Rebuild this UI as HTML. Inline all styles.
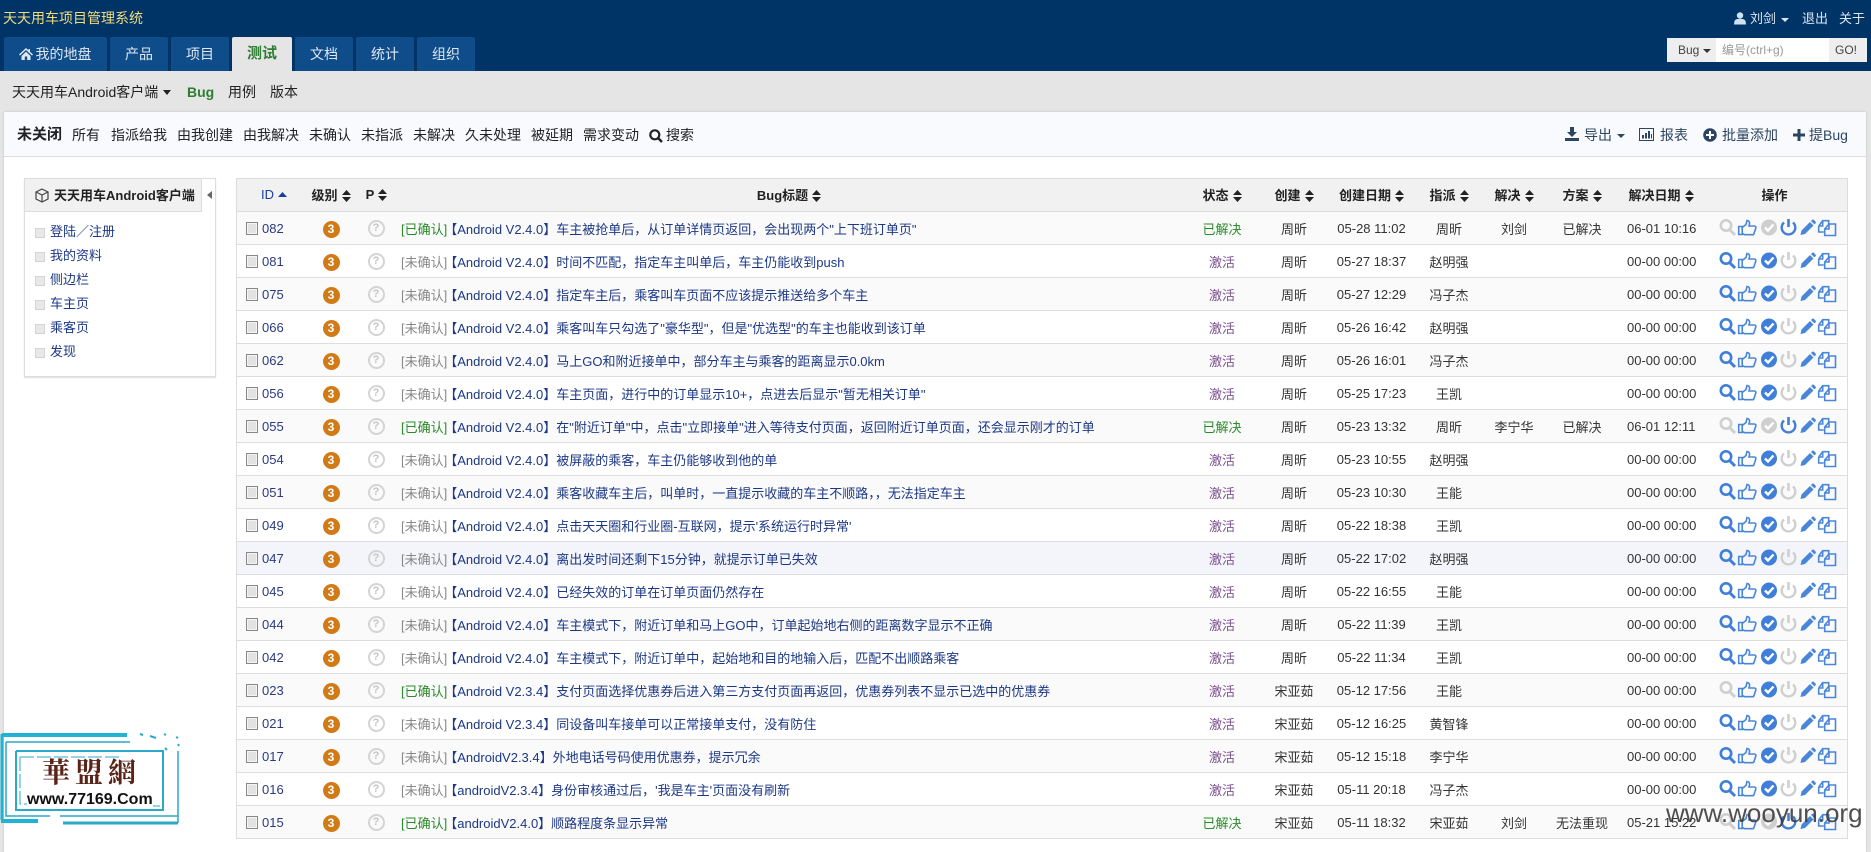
<!DOCTYPE html>
<html lang="zh"><head><meta charset="utf-8"><title>天天用车项目管理系统</title>
<style>
*{box-sizing:border-box}
html,body{margin:0;padding:0;width:1871px;height:842px;overflow:hidden;background:#e5e5e5;font:13px "Liberation Sans","WenQuanYi Zen Hei","Noto Sans CJK SC",sans-serif;color:#222}
.a{position:absolute;white-space:nowrap}
#top{position:absolute;left:0;top:0;width:1871px;height:71px;background:#003366}
.tab{position:absolute;top:37px;height:34px;background:#0f4c8a;color:#dfe8f2;font-size:14px;line-height:34px;text-align:center;border-radius:2px 2px 0 0}
.tab.on{background:#e5e5e5;color:#2e7d32;font-weight:bold;font-size:15px}
#panel{position:absolute;left:4px;top:112px;width:1862px;height:740px;background:#fff;box-shadow:0 0 2px #bbb}
#bar{position:absolute;left:0;top:0;width:1862px;height:45px;background:#f8fafd;border-bottom:1px solid #ddd}
.t{position:absolute;top:125px;font-size:14px;line-height:20px;color:#222;white-space:nowrap}
.r{color:#2c4560}
#side{position:absolute;left:24px;top:178px;width:192px;height:199px;background:#fff;border:1px solid #ddd;box-shadow:0 1px 1px #ddd}
#sh{position:absolute;left:0;top:0;width:190px;height:33px;background:#f1f1f1;border-bottom:1px solid #ddd;font-weight:bold;font-size:13px;line-height:33px;white-space:nowrap}
#sh span{position:absolute;left:29px;top:0}
#sb{position:absolute;left:176px;top:0;width:14px;height:33px;background:#fff;border-left:1px solid #ddd}
.li{position:absolute;left:25px;color:#1c3885;line-height:20px;white-space:nowrap}
.li:before{content:"";position:absolute;left:-15px;top:6px;width:8px;height:8px;background:#e8e8e8;border:1px solid #d4d4d4}
table{position:absolute;left:236px;top:178px;width:1612px;table-layout:fixed;border-collapse:separate;border-spacing:0;border-left:1px solid #ddd;border-right:1px solid #ddd;color:#333}
th{height:34px;padding:0 0 2px;background:#f1f1f1;border-top:1px solid #ddd;border-bottom:1px solid #ddd;font-size:13px;font-weight:bold;color:#222;white-space:nowrap;text-align:center}
td{height:33px;padding:0;border-bottom:1px solid #ddd;text-align:center;white-space:nowrap;overflow:visible}
tr:nth-child(odd) td{background:#fafafa}
tr.h td{background:#f3f5fa!important}
.s{display:inline-block;width:9px;height:12px;margin-left:4px;vertical-align:-2px}
.i{text-align:left;color:#2a3a80}
.c{display:inline-block;width:12px;height:13px;margin:0 4px 0 9px;border:1px solid #888;background:#e2e2e2;box-shadow:inset 0 0 0 1px #f4f4f4;vertical-align:-2px}
.l{display:inline-block;position:relative;top:1px;width:17px;height:17px;border-radius:50%;background:#d27a16;color:#fff;font-size:12px;font-weight:bold;line-height:17px;text-align:center}
.q{display:inline-block;position:relative;top:0;left:1px;width:17px;height:17px;border-radius:50%;border:2px solid #d4d4d4;color:#c4c4c4;font-size:11px;font-style:normal;font-weight:bold;line-height:13px;text-align:center}
.n{text-align:left;color:#1c3885;padding-left:3px}
.n em{font-style:normal;color:#888;margin-right:-3px}
.n em.g{color:#2a8a2a}
.x{color:#7a4f8e}.y{color:#2a8a2a}.d{color:#333}
.o{display:block;width:120px;height:32px;margin-left:23px}
</style></head><body>
<svg width="0" height="0" style="position:absolute"><defs>
<symbol id="ar" viewBox="0 0 9 12"><path d="M0 5L4.5 0 9 5zM0 7l4.5 5L9 7z" fill="#222"/></symbol>
<g id="sr" fill="none"><circle cx="8" cy="13.5" r="5.2" stroke-width="2.6"/><path d="M12 18l5 5" stroke-width="3"/></g>
<g id="ck"><circle cx="51" cy="15.5" r="8"/><path d="M47 15.5l3 3 5.5-6" fill="none" stroke="#fff" stroke-width="2.4"/></g>
<g id="pw" fill="none" stroke-width="2.4"><path d="M66 10.5A6.8 6.8 0 1 0 75 10.5"/><path d="M70.5 7v8" stroke-width="2.6"/></g>
<g id="rest"><g fill="none" stroke="#4a86d8" stroke-width="1.6"><path d="M20.7 14.5h3.5v8h-3.5zM24.2 15.5l3.8-3 1-4q3 .2 2.5 3.5l-.5 2h5.2q2 0 1.6 2l-1.8 5.5q-.3 1.2-1.5 1.2h-7.800l-2.500-1.200"/><path d="M100.700 14l4-5.300h6v5M100.700 14v6h5M104.700 8.700v5.300h-4"/><path d="M106.700 17l4.300-5h6.500v11.500h-10.800zM111 12v5h-4.300"/></g><path d="M82.500 23l1-4.500 8.500-8.500 3.500 3.500-8.500 8.500z" fill="#4a86d8"/><path d="M93 9l1.200-1.200q.8-.7 1.600 0l1.800 1.800q.7.8 0 1.600l-1.200 1.200z" fill="#4a86d8"/></g>
<symbol id="A" viewBox="0 0 120 32"><use href="#sr" stroke="#3f7fd9"/><use href="#ck" fill="#3f7fd9"/><use href="#pw" stroke="#cfcfcf"/><use href="#rest"/></symbol>
<symbol id="B" viewBox="0 0 120 32"><use href="#sr" stroke="#cfcfcf"/><use href="#ck" fill="#3f7fd9"/><use href="#pw" stroke="#cfcfcf"/><use href="#rest"/></symbol>
<symbol id="C" viewBox="0 0 120 32"><use href="#sr" stroke="#cfcfcf"/><use href="#ck" fill="#cfcfcf"/><use href="#pw" stroke="#3f7fd9"/><use href="#rest"/></symbol>
</defs></svg>

<div id="top"></div>
<div class="a" style="left:3px;top:8px;font-size:14px;line-height:20px;color:#f2dc7c">天天用车项目管理系统</div>
<div class="a" style="left:1734px;top:9px;width:137px;height:20px;color:#dde6f0;line-height:20px">
<svg class="a" style="left:0;top:3px" width="12" height="13" viewBox="0 0 12 13"><circle cx="6" cy="3.500" r="3.200" fill="#cfe0f0"/><path d="M0 12.500q0-5.500 3.500-5.500h5q3.500 0 3.500 5.500z" fill="#cfe0f0"/></svg>
<span class="a" style="left:16px">刘剑</span><span class="a" style="left:47px;top:9px;border:4px solid transparent;border-top-color:#dde6f0;border-bottom:0"></span><span class="a" style="left:68px">退出</span><span class="a" style="left:105px">关于</span></div>

<div class="tab" style="left:4px;width:103px;padding-left:16px">我的地盘<svg class="a" style="left:15px;top:11px" width="14" height="12" viewBox="0 0 14 12"><path d="M7 0L0 6.500l1 1L7 2l6 5.500 1-1-3-2.800V1H9.500v1.400zM2.500 8v4h3.300V8.500h2.400V12h3.300V8L7 3.800z" fill="#dfe8f2"/></svg></div>
<div class="tab" style="left:110px;width:58px">产品</div>
<div class="tab" style="left:171px;width:58px">项目</div>
<div class="tab on" style="left:232px;width:60px">测试</div>
<div class="tab" style="left:295px;width:58px">文档</div>
<div class="tab" style="left:356px;width:58px">统计</div>
<div class="tab" style="left:417px;width:58px">组织</div>

<div class="a" style="left:1667px;top:38px;width:200px;height:24px;background:#eee;line-height:24px;color:#444">
<span class="a" style="left:11px;font-size:12px">Bug</span><span class="a" style="left:36px;top:11px;border:4px solid transparent;border-top-color:#333;border-bottom:0"></span>
<span class="a" style="left:49px;top:0;width:113px;height:24px;background:#fff;padding-left:6px;color:#999;font-size:12px">编号(ctrl+g)</span>
<span class="a" style="left:168px;font-size:12px">GO!</span></div>

<div class="t" style="left:12px;top:82px">天天用车Android客户端</div>
<span class="a" style="left:163px;top:90px;border:4px solid transparent;border-top-color:#222;border-bottom:0;border-top-width:5px"></span>
<div class="t" style="left:187px;top:82px;color:#2e7d32;font-weight:bold">Bug</div>
<div class="t" style="left:228px;top:82px">用例</div>
<div class="t" style="left:270px;top:82px">版本</div>

<div id="panel"><div id="bar"></div></div>

<div class="t" style="left:17px;font-weight:bold;font-size:15px">未关闭</div>
<div class="t" style="left:72px">所有</div>
<div class="t" style="left:111px">指派给我</div>
<div class="t" style="left:177px">由我创建</div>
<div class="t" style="left:243px">由我解决</div>
<div class="t" style="left:309px">未确认</div>
<div class="t" style="left:361px">未指派</div>
<div class="t" style="left:413px">未解决</div>
<div class="t" style="left:465px">久未处理</div>
<div class="t" style="left:531px">被延期</div>
<div class="t" style="left:583px">需求变动</div>
<svg class="a" style="left:649px;top:129px" width="14" height="14" viewBox="0 0 14 14"><circle cx="5.800" cy="5.800" r="4.500" fill="none" stroke="#222" stroke-width="2.200"/><path d="M9 9l4 4" stroke="#222" stroke-width="2.500"/></svg>
<div class="t" style="left:666px">搜索</div>

<svg class="a" style="left:1565px;top:127px" width="14" height="14" viewBox="0 0 14 14"><path d="M5 0h4v5h3L7 10 2 5h3zM0 11h14v3H0z" fill="#2c4560"/></svg>
<div class="t r" style="left:1584px">导出</div>
<span class="a" style="left:1617px;top:134px;border:4px solid transparent;border-top-color:#2c4560;border-bottom:0"></span>
<svg class="a" style="left:1639px;top:128px" width="15" height="13" viewBox="0 0 15 13"><path d="M.5.500h14v12H.500z" fill="none" stroke="#2c4560"/><path d="M3 7h2v3.500H3zM6 5h2v5.500H6zM9 3h2v7.500H9zM12 6h1v4.500h-1z" fill="#2c4560"/></svg>
<div class="t r" style="left:1660px">报表</div>
<svg class="a" style="left:1703px;top:128px" width="14" height="14" viewBox="0 0 14 14"><circle cx="7" cy="7" r="6.800" fill="#2c4560"/><path d="M6 3h2v3h3v2H8v3H6V8H3V6h3z" fill="#fff"/></svg>
<div class="t r" style="left:1722px">批量添加</div>
<svg class="a" style="left:1793px;top:129px" width="12" height="12" viewBox="0 0 12 12"><path d="M4.500 0h3v4.500H12v3H7.500V12h-3V7.500H0v-3h4.500z" fill="#2c4560"/></svg>
<div class="t r" style="left:1809px">提Bug</div>

<div id="side">
<div id="sh"><svg class="a" style="left:10px;top:9px" width="14" height="15" viewBox="0 0 14 15"><path d="M7 1l6 3v7l-6 3-6-3V4zM1 4l6 3 6-3M7 7v7" fill="none" stroke="#444" stroke-width="1.200"/></svg><span>天天用车Android客户端</span></div>
<div id="sb"><span class="a" style="left:5px;top:12px;border:4px solid transparent;border-right:5px solid #666;border-left:0"></span></div>
<div class="li" style="top:43px">登陆／注册</div>
<div class="li" style="top:67px">我的资料</div>
<div class="li" style="top:91px">侧边栏</div>
<div class="li" style="top:115px">车主页</div>
<div class="li" style="top:139px">乘客页</div>
<div class="li" style="top:163px">发现</div>
</div>

<table>
<colgroup><col style="width:73px"><col style="width:42px"><col style="width:46px"><col style="width:794px"><col style="width:60px"><col style="width:84px"><col style="width:71px"><col style="width:84px"><col style="width:46px"><col style="width:90px"><col style="width:68px"><col style="width:152px"></colgroup>
<thead><tr>
<th style="text-align:left;padding-left:24px;color:#1a3ea0;font-weight:normal">ID<svg width="9" height="5" style="margin-left:4px;vertical-align:2px"><path d="M0 5L4.500 0 9 5z" fill="#1a3ea0"/></svg></th>
<th>级别<svg class="s"><use href="#ar"/></svg></th>
<th style="padding-left:3px">P<svg class="s"><use href="#ar"/></svg></th>
<th style="padding-right:12px">Bug标题<svg class="s"><use href="#ar"/></svg></th>
<th>状态<svg class="s"><use href="#ar"/></svg></th>
<th>创建<svg class="s"><use href="#ar"/></svg></th>
<th>创建日期<svg class="s"><use href="#ar"/></svg></th>
<th>指派<svg class="s"><use href="#ar"/></svg></th>
<th>解决<svg class="s"><use href="#ar"/></svg></th>
<th>方案<svg class="s"><use href="#ar"/></svg></th>
<th>解决日期<svg class="s"><use href="#ar"/></svg></th>
<th style="padding-left:7px">操作</th>
</tr></thead>
<tbody>
<tr><td class="i"><i class="c"></i>082</td><td><b class="l">3</b></td><td><i class="q">?</i></td><td class="n"><em class="g">[已确认]</em>【Android V2.4.0】车主被抢单后，从订单详情页返回，会出现两个"上下班订单页"</td><td class="y">已解决</td><td>周昕</td><td>05-28 11:02</td><td>周昕</td><td>刘剑</td><td>已解决</td><td>06-01 10:16</td><td><svg class="o"><use href="#C"/></svg></td></tr>
<tr><td class="i"><i class="c"></i>081</td><td><b class="l">3</b></td><td><i class="q">?</i></td><td class="n"><em>[未确认]</em>【Android V2.4.0】时间不匹配，指定车主叫单后，车主仍能收到push</td><td class="x">激活</td><td>周昕</td><td>05-27 18:37</td><td>赵明强</td><td></td><td></td><td>00-00 00:00</td><td><svg class="o"><use href="#A"/></svg></td></tr>
<tr><td class="i"><i class="c"></i>075</td><td><b class="l">3</b></td><td><i class="q">?</i></td><td class="n"><em>[未确认]</em>【Android V2.4.0】指定车主后，乘客叫车页面不应该提示推送给多个车主</td><td class="x">激活</td><td>周昕</td><td>05-27 12:29</td><td>冯子杰</td><td></td><td></td><td>00-00 00:00</td><td><svg class="o"><use href="#A"/></svg></td></tr>
<tr><td class="i"><i class="c"></i>066</td><td><b class="l">3</b></td><td><i class="q">?</i></td><td class="n"><em>[未确认]</em>【Android V2.4.0】乘客叫车只勾选了"豪华型"，但是"优选型"的车主也能收到该订单</td><td class="x">激活</td><td>周昕</td><td>05-26 16:42</td><td>赵明强</td><td></td><td></td><td>00-00 00:00</td><td><svg class="o"><use href="#A"/></svg></td></tr>
<tr><td class="i"><i class="c"></i>062</td><td><b class="l">3</b></td><td><i class="q">?</i></td><td class="n"><em>[未确认]</em>【Android V2.4.0】马上GO和附近接单中，部分车主与乘客的距离显示0.0km</td><td class="x">激活</td><td>周昕</td><td>05-26 16:01</td><td>冯子杰</td><td></td><td></td><td>00-00 00:00</td><td><svg class="o"><use href="#A"/></svg></td></tr>
<tr><td class="i"><i class="c"></i>056</td><td><b class="l">3</b></td><td><i class="q">?</i></td><td class="n"><em>[未确认]</em>【Android V2.4.0】车主页面，进行中的订单显示10+，点进去后显示"暂无相关订单"</td><td class="x">激活</td><td>周昕</td><td>05-25 17:23</td><td>王凯</td><td></td><td></td><td>00-00 00:00</td><td><svg class="o"><use href="#A"/></svg></td></tr>
<tr><td class="i"><i class="c"></i>055</td><td><b class="l">3</b></td><td><i class="q">?</i></td><td class="n"><em class="g">[已确认]</em>【Android V2.4.0】在"附近订单"中，点击"立即接单"进入等待支付页面，返回附近订单页面，还会显示刚才的订单</td><td class="y">已解决</td><td>周昕</td><td>05-23 13:32</td><td>周昕</td><td>李宁华</td><td>已解决</td><td>06-01 12:11</td><td><svg class="o"><use href="#C"/></svg></td></tr>
<tr><td class="i"><i class="c"></i>054</td><td><b class="l">3</b></td><td><i class="q">?</i></td><td class="n"><em>[未确认]</em>【Android V2.4.0】被屏蔽的乘客，车主仍能够收到他的单</td><td class="x">激活</td><td>周昕</td><td>05-23 10:55</td><td>赵明强</td><td></td><td></td><td>00-00 00:00</td><td><svg class="o"><use href="#A"/></svg></td></tr>
<tr><td class="i"><i class="c"></i>051</td><td><b class="l">3</b></td><td><i class="q">?</i></td><td class="n"><em>[未确认]</em>【Android V2.4.0】乘客收藏车主后，叫单时，一直提示收藏的车主不顺路，，无法指定车主</td><td class="x">激活</td><td>周昕</td><td>05-23 10:30</td><td>王能</td><td></td><td></td><td>00-00 00:00</td><td><svg class="o"><use href="#A"/></svg></td></tr>
<tr><td class="i"><i class="c"></i>049</td><td><b class="l">3</b></td><td><i class="q">?</i></td><td class="n"><em>[未确认]</em>【Android V2.4.0】点击天天圈和行业圈-互联网，提示'系统运行时异常'</td><td class="x">激活</td><td>周昕</td><td>05-22 18:38</td><td>王凯</td><td></td><td></td><td>00-00 00:00</td><td><svg class="o"><use href="#A"/></svg></td></tr>
<tr class="h"><td class="i"><i class="c"></i>047</td><td><b class="l">3</b></td><td><i class="q">?</i></td><td class="n"><em>[未确认]</em>【Android V2.4.0】离出发时间还剩下15分钟，就提示订单已失效</td><td class="x">激活</td><td>周昕</td><td>05-22 17:02</td><td>赵明强</td><td></td><td></td><td>00-00 00:00</td><td><svg class="o"><use href="#A"/></svg></td></tr>
<tr><td class="i"><i class="c"></i>045</td><td><b class="l">3</b></td><td><i class="q">?</i></td><td class="n"><em>[未确认]</em>【Android V2.4.0】已经失效的订单在订单页面仍然存在</td><td class="x">激活</td><td>周昕</td><td>05-22 16:55</td><td>王能</td><td></td><td></td><td>00-00 00:00</td><td><svg class="o"><use href="#A"/></svg></td></tr>
<tr><td class="i"><i class="c"></i>044</td><td><b class="l">3</b></td><td><i class="q">?</i></td><td class="n"><em>[未确认]</em>【Android V2.4.0】车主模式下，附近订单和马上GO中，订单起始地右侧的距离数字显示不正确</td><td class="x">激活</td><td>周昕</td><td>05-22 11:39</td><td>王凯</td><td></td><td></td><td>00-00 00:00</td><td><svg class="o"><use href="#A"/></svg></td></tr>
<tr><td class="i"><i class="c"></i>042</td><td><b class="l">3</b></td><td><i class="q">?</i></td><td class="n"><em>[未确认]</em>【Android V2.4.0】车主模式下，附近订单中，起始地和目的地输入后，匹配不出顺路乘客</td><td class="x">激活</td><td>周昕</td><td>05-22 11:34</td><td>王凯</td><td></td><td></td><td>00-00 00:00</td><td><svg class="o"><use href="#A"/></svg></td></tr>
<tr><td class="i"><i class="c"></i>023</td><td><b class="l">3</b></td><td><i class="q">?</i></td><td class="n"><em class="g">[已确认]</em>【Android V2.3.4】支付页面选择优惠券后进入第三方支付页面再返回，优惠券列表不显示已选中的优惠券</td><td class="x">激活</td><td>宋亚茹</td><td>05-12 17:56</td><td>王能</td><td></td><td></td><td>00-00 00:00</td><td><svg class="o"><use href="#B"/></svg></td></tr>
<tr><td class="i"><i class="c"></i>021</td><td><b class="l">3</b></td><td><i class="q">?</i></td><td class="n"><em>[未确认]</em>【Android V2.3.4】同设备叫车接单可以正常接单支付，没有防住</td><td class="x">激活</td><td>宋亚茹</td><td>05-12 16:25</td><td>黄智锋</td><td></td><td></td><td>00-00 00:00</td><td><svg class="o"><use href="#A"/></svg></td></tr>
<tr><td class="i"><i class="c"></i>017</td><td><b class="l">3</b></td><td><i class="q">?</i></td><td class="n"><em>[未确认]</em>【AndroidV2.3.4】外地电话号码使用优惠券，提示冗余</td><td class="x">激活</td><td>宋亚茹</td><td>05-12 15:18</td><td>李宁华</td><td></td><td></td><td>00-00 00:00</td><td><svg class="o"><use href="#A"/></svg></td></tr>
<tr><td class="i"><i class="c"></i>016</td><td><b class="l">3</b></td><td><i class="q">?</i></td><td class="n"><em>[未确认]</em>【androidV2.3.4】身份审核通过后，'我是车主'页面没有刷新</td><td class="x">激活</td><td>宋亚茹</td><td>05-11 20:18</td><td>冯子杰</td><td></td><td></td><td>00-00 00:00</td><td><svg class="o"><use href="#A"/></svg></td></tr>
<tr><td class="i"><i class="c"></i>015</td><td><b class="l">3</b></td><td><i class="q">?</i></td><td class="n"><em class="g">[已确认]</em>【androidV2.4.0】顺路程度条显示异常</td><td class="y">已解决</td><td>宋亚茹</td><td>05-11 18:32</td><td>宋亚茹</td><td>刘剑</td><td>无法重现</td><td>05-21 15:22</td><td><svg class="o"><use href="#C"/></svg></td></tr>
</tbody></table>

<svg class="a" style="left:0;top:728px" width="185" height="102" viewBox="0 0 185 102">
<g fill="none" stroke="#2aa9c9">
<path d="M2 7H127" stroke-width="4" stroke="#1fb3d4"/>
<path d="M2 6V92" stroke-width="3" stroke="#1fb3d4"/>
<path d="M1 93H38" stroke-width="4" stroke="#1fb3d4"/>
<path d="M63 95H178" stroke-width="3"/>
<path d="M6 14H130M6 14V88H50M60 88H178M178 23V95" stroke-width="1.500"/>
<path d="M16 23H163V82H16V23" stroke-width="2"/>
<path d="M20 29H120M20 29V76H70M85 78H160" stroke-width="1" stroke-dasharray="14 3"/>
<path d="M140 6l3 1M150 8l6 2M164 6l2 1M176 9l2 1M178 16l1 2M165 20l2 2" stroke-width="2"/>
</g></svg>
<div class="a" style="left:42px;top:753px;font:bold 28px/36px 'Noto Serif CJK SC','Noto Sans CJK SC',serif;letter-spacing:5px;color:#5a2318">華盟網</div>
<div class="a" style="left:27px;top:791px;font:bold 16px/18px 'Liberation Sans',sans-serif;color:#111;background:#fff">www.77169.Com</div>
<div class="a" style="left:1666px;top:798px;font:26px/30px 'Liberation Sans',sans-serif;color:rgba(60,60,60,.9)">www.wooyun.org</div>
</body></html>
